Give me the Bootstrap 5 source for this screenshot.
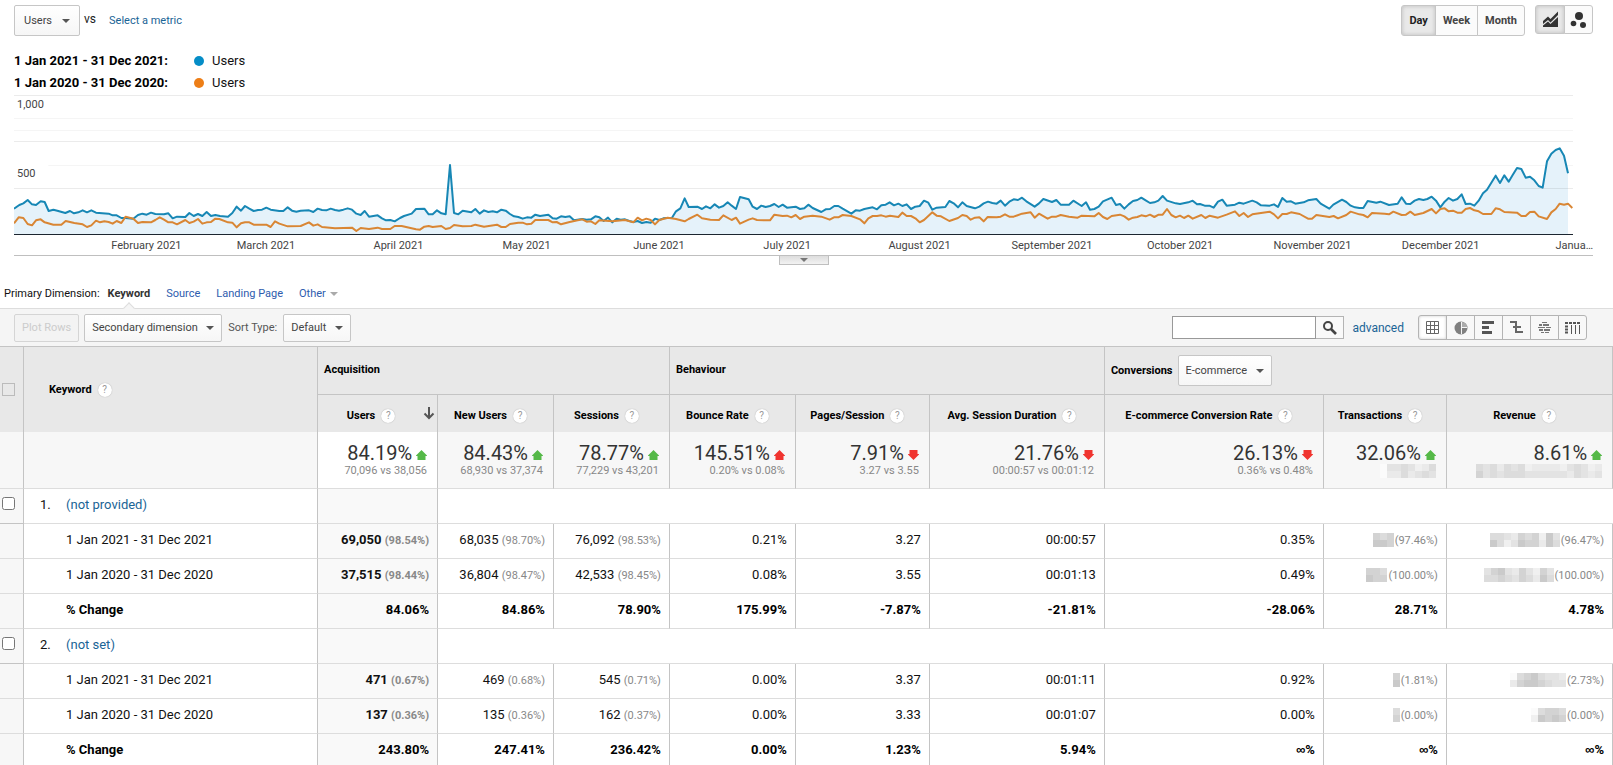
<!DOCTYPE html>
<html lang="en">
<head>
<meta charset="utf-8">
<meta name="viewport" content="width=device-width, initial-scale=1">
<title>Organic keywords</title>
<link href="https://cdn.jsdelivr.net/npm/bootstrap@5.3.0/dist/css/bootstrap.min.css" rel="stylesheet">
<style>
  body { font-family: Roboto, "Liberation Sans", sans-serif; font-size: 11px; line-height: 16px; color: #222; background: #fff; }
  a { color: #1a6496; text-decoration: none; }
  .fs-legend { font-size: 13px; line-height: 22px; color: #111; }
  .top-bar { padding: 5px 20px 0 14px; }
  .top-bar .versus { padding-top: 6px; }
  .top-bar a { padding: 8px 0 0 13px; }
  .report-chart { padding: 14px 20px 0 14px; }

  /* controls */
  .ga-btn, .ga-select { border: 1px solid #c6c6c6; border-radius: 2px; background-color: #fafafa; color: #444; font-size: 11px; line-height: 16px; height: 28px; padding: 0 9px; }
  .ga-select { appearance: none; padding: 0 23px 0 7px; background: url("data:image/svg+xml,%3Csvg xmlns='http://www.w3.org/2000/svg' width='8' height='4'%3E%3Cpath d='M0 0h8L4 4z' fill='%23555'/%3E%3C/svg%3E") no-repeat right 7px center, linear-gradient(#fff, #f6f6f6); }
  .ga-select.metric { padding: 0 26px 0 9px; background-position: right 9px center, 0 0; }
  .ga-tall { height: 31px; }
  .ga-btn:disabled { color: #ccc; background: #f3f3f3; border-color: #d5d5d5; padding: 0 7px; }
  .ga-group > button { border: 1px solid #c6c6c6; margin-left: -1px; background: #fbfbfb; color: #444; font-weight: 700; height: 31px; padding: 0 7px; line-height: 16px; }
  .ga-group > button:first-child { border-radius: 3px 0 0 3px; margin-left: 0; }
  .ga-group > button:last-child { border-radius: 0 3px 3px 0; }
  .ga-group > button.on { background: #e9e9e9; box-shadow: inset 0 0 4px #bbb; color: #222; }
  .ga-group.icons > button { width: 29px; height: 29px; padding: 0; display: flex; align-items: center; justify-content: center; }
  .ga-group.icons > button.on { width: 30px; }
  .ga-group.icons { margin-left: 10px; }
  .ga-group.views > button { width: 29px; height: 25px; padding: 0; display: flex; align-items: center; justify-content: center; border-color: #b4b4b4; background: #f8f8f8; }
  .ga-group.views > button.on { background: #fff; box-shadow: inset 0 0 3px #ccc; }
  .dot { width: 10px; height: 10px; border-radius: 50%; margin: 0 8px 0 5px; }
  .dot-now { background: #058dc7; } .dot-before { background: #ed7e17; }
  .legend-name { width: 175px; font-weight: 700; color: #000; }

  /* chart */
  .plot { height: 140px; margin: 1px 20px 0 0; }
  .plot svg { width: 100%; height: 100%; }
  .plot polyline, .plot line { vector-effect: non-scaling-stroke; fill: none; }
  .y-label { position: absolute; left: 3px; line-height: 14px; color: #444; }
  .y-top { top: 3px; } .y-mid { top: 72px; }
  .months { display: grid; height: 21px; color: #444; line-height: 21px; border-bottom: 1px solid #bfbfbf;
    grid-template-columns: minmax(0,31fr) minmax(0,28fr) minmax(0,31fr) minmax(0,30fr) minmax(0,31fr) minmax(0,30fr) minmax(0,31fr) minmax(0,31fr) minmax(0,30fr) minmax(0,31fr) minmax(0,30fr) minmax(0,31fr) 20px; }
  .months > span { width: 0; display: flex; justify-content: center; white-space: nowrap; }
  .months > span:last-child { width: auto; justify-content: flex-end; }
  .drawer { width: 50px; height: 9px; border: 1px solid #bfbfbf; border-top: 0; background: linear-gradient(#ddd, #f2f2f2); padding: 0; display: flex; justify-content: center; align-items: center; }

  /* dimension bar and toolbar */
  .dims { height: 43px; padding: 21px 4px 0; gap: 16px; color: #111; }
  .dims a, .dims select { color: #2e5cae; }
  .dims select { appearance: none; border: 0; padding: 0 12px 0 0; line-height: 16px; background: url("data:image/svg+xml,%3Csvg xmlns='http://www.w3.org/2000/svg' width='8' height='4'%3E%3Cpath d='M0 0h8L4 4z' fill='%23aaa'/%3E%3C/svg%3E") no-repeat right center; }
  .dims .current { color: #333; position: relative; margin-left: -8px; }
  .dims .current::after { content: ""; position: absolute; left: 50%; bottom: -10px; width: 8px; height: 8px; margin-left: -4px; background: #f5f5f5; border: 1px solid #ddd; border-right: 0; border-bottom: 0; transform: rotate(45deg); }
  .tools { height: 38px; background: #f5f5f5; border-top: 1px solid #ddd; padding: 0 26px 0 14px; }
  .tools .second { margin: 0 6px 0 5px; }
  .tools label { color: #555; margin-right: 6px; }
  .search-box input { width: 144px; height: 23px; border: 1px solid #999; border-radius: 0; padding: 0 4px; background: #fff; }
  .search-box button { width: 28px; height: 23px; border: 1px solid #b4b4b4; border-left: 0; background: #f9f9f9; padding: 0; display: flex; align-items: center; justify-content: center; }
  .fs-link { font-size: 12px; }
  .adv { margin: 0 14px 0 8px; }

  /* data table */
  .data { table-layout: fixed; width: 100%; border-collapse: separate; border-spacing: 0; border-top: 1px solid #c4c4c4; }
  .c-box { width: 24px; } .c-key { width: 18.23%; } .c-usr { width: 7.44%; } .c-new { width: 7.19%; } .c-bnc { width: 7.81%; }
  .c-pps { width: 8.31%; } .c-dur { width: 10.85%; } .c-ecr { width: 13.58%; } .c-trn { width: 7.63%; } .c-rev { width: 10.29%; }
  .data th, .data td { border-right: 1px solid #c4c4c4; vertical-align: top; }
  .data thead th { background: #e8e8e8; color: #000; font-weight: 700; vertical-align: middle; padding: 0 7px; }
  .data .groups th { height: 48px; border-bottom: 1px solid #c4c4c4; }
  .data .groups th[rowspan] { border-bottom: 0; }
  .data .groups th:first-child { padding: 0 0 0 2px; }
  .data .groups .key { padding-left: 25px; }
  .data .groups .group-name { padding: 0 6px 1px; }
  .data .groups .group-conv { padding: 0 6px; }
  .group-conv select { margin-left: 5px; }
  .data .cols th { height: 37px; padding: 4px 10px 0 0; text-align: center; white-space: nowrap; position: relative; }
  .data .cols th:first-child { padding-right: 13px; }
  .help { display: inline-flex; align-items: center; justify-content: center; width: 14px; height: 14px; margin-left: 6px; border-radius: 50%; background: #fff; box-shadow: 0 0 1px #999; color: #999; font-size: 10px; line-height: 14px; font-weight: 400; }
  .sort-arrow { position: absolute; right: 2px; top: 12px; }
  .data .totals td { height: 57px; padding: 10px 10px 0 0; background: #f7f7f7; border-bottom: 1px solid #ddd; text-align: right; color: #888; line-height: 13px; white-space: nowrap; }
  .data .totals .sorted { background: #fff; }
  .big { font-size: 20px; line-height: 22px; color: #333; }
  .big svg { margin-left: -1px; }
  .data .rows td, .data .rows th { height: 35px; padding: 6px 8px 0 0; border-bottom: 1px solid #ddd; font-size: 13px; line-height: 19px; text-align: right; color: #111; white-space: nowrap; font-weight: 400; }
  .data .rows td.box { background: #f7f7f7; text-align: left; padding: 8px 0 0 2px; line-height: 12px; }
  .data .rows .item td.box { border-bottom-color: #c4c4c4; }
  .data .rows th { text-align: left; padding-left: 42px; }
  .data .rows .item th { padding-left: 16px; }
  .data .rows .sorted { background: #f9f9f9; font-weight: 700; }
  .data .rows .change > * { font-weight: 700; color: #000; }
  .data .rows .item .rest { border-right: 0; }
  .data small { font-size: 11px; color: #888; }
  .inf { font-family: "Liberation Sans", sans-serif; }
  .num { display: inline-block; width: 26px; }
  .tick { width: 13px; height: 13px; margin: 0; display: block; }
  .redact { display: inline-block; vertical-align: -3px; margin-right: 1px; }
  .totals .redact { margin-right: 0; vertical-align: top; }
  .tick:disabled { appearance: none; border: 1px solid #bbb; background: #e8e8e8; }
</style>
</head>
<body>
<div class="vh-100 overflow-hidden">
  <header class="top-bar d-flex align-items-start">
    <select class="ga-select metric ga-tall" aria-label="Metric"><option>Users</option></select>
    <span class="versus ms-1 fs-link">vs</span>
    <a href="#">Select a metric</a>
    <div class="ga-group d-flex ms-auto">
      <button type="button" class="on">Day</button><button type="button">Week</button><button type="button">Month</button>
    </div>
    <div class="ga-group icons d-flex">
      <button type="button" class="on" aria-label="Line chart"><svg width="17" height="17" viewBox="0 0 17 17"><path d="M1 10 6 5.500 8.500 8 16 .5V4L8.500 11.500 6 9 1 13ZM1 14.500 6 10.500 8.500 13 16 6V16H1Z" fill="#333"/></svg></button>
      <button type="button" aria-label="Motion chart"><svg width="18" height="18" viewBox="0 0 18 18" fill="#333"><circle cx="9" cy="5" r="4"/><circle cx="3.500" cy="12.500" r="2.800"/><circle cx="13" cy="14" r="3"/></svg></button>
    </div>
  </header>

  <section class="report-chart">
    <div class="fs-legend d-flex align-items-center"><span class="legend-name">1 Jan 2021 - 31 Dec 2021:</span><span class="dot dot-now"></span>Users</div>
    <div class="fs-legend d-flex align-items-center"><span class="legend-name">1 Jan 2020 - 31 Dec 2020:</span><span class="dot dot-before"></span>Users</div>
    <div class="position-relative">
      <div class="plot">
        <svg viewBox="42 285 4677 420" preserveAspectRatio="none" aria-label="Users per day">
          <g stroke="#ebebeb" stroke-width="1">
            <line x1="42" x2="4719" y1="286.500" y2="286.500"/><line x1="42" x2="4719" y1="424.500" y2="424.500"/>
          </g>
          <g stroke="#f5f5f5" stroke-width="1">
            <line x1="42" x2="4719" y1="355.500" y2="355.500"/><line x1="42" x2="4719" y1="391.500" y2="391.500"/><line x1="145" x2="4719" y1="496.500" y2="496.500"/>
          </g>
          <path id="area" fill="#e5f2fa"/>
          <line x1="42" x2="4719" y1="565.500" y2="565.500" stroke="#000" stroke-opacity=".08"/>
          <polyline id="now" stroke="#1787b5" stroke-width="2" stroke-linejoin="round" points="42,626 58,615 70,610 83,600 96,613 108,615 122,604 134,606 146,633 160,629 172,632 196,639 210,633 222,640 235,637 248,631 261,637 274,631 288,638 326,641 338,646 350,646 364,654 377,654 400,656 414,645 427,641 440,644 453,638 466,642 492,643 505,640 518,655 531,650 556,651 568,639 581,648 594,642 607,648 620,636 633,648 646,645 660,648 684,650 697,639 710,620 723,632 735,618 748,626 761,633 774,630 786,629 799,623 812,629 838,633 850,633 863,622 876,632 889,635 902,632 927,631 940,636 953,626 966,630 979,631 992,626 1005,630 1017,632 1030,629 1043,625 1056,629 1069,641 1082,645 1094,633 1107,650 1133,646 1146,655 1158,661 1171,660 1184,664 1200,654 1212,648 1235,641 1248,627 1273,626 1286,643 1298,643 1311,631 1324,640 1337,643 1350,495 1362,639 1375,643 1388,632 1414,637 1426,627 1439,641 1452,631 1465,636 1478,634 1491,637 1504,629 1517,632 1530,642 1542,649 1555,651 1568,656 1581,652 1594,653 1606,644 1620,648 1645,644 1658,655 1670,656 1683,649 1696,651 1709,649 1722,661 1747,657 1760,659 1773,658 1786,649 1798,652 1811,663 1824,653 1837,667 1850,656 1862,659 1875,658 1888,663 1900,666 1913,663 1926,669 1939,666 1952,668 1965,656 1978,660 1990,655 2016,653 2028,634 2041,625 2054,595 2066,621 2092,620 2106,627 2118,619 2131,625 2144,613 2157,623 2170,618 2183,607 2195,617 2208,627 2220,591 2246,598 2258,620 2271,627 2284,617 2297,621 2310,618 2323,612 2336,621 2348,614 2361,623 2387,620 2400,627 2413,625 2425,614 2438,624 2464,636 2477,628 2490,627 2503,618 2515,618 2528,626 2554,641 2567,631 2580,632 2593,627 2618,622 2631,628 2644,616 2657,614 2669,607 2682,616 2695,611 2707,618 2720,613 2733,627 2746,620 2759,618 2772,602 2785,608 2797,629 2810,623 2836,621 2848,603 2861,610 2874,622 2887,607 2900,618 2925,625 2938,620 2951,610 2964,605 2977,609 2990,611 3002,602 3015,617 3028,605 3041,598 3054,600 3066,593 3079,604 3104,620 3117,610 3130,597 3156,606 3169,600 3182,614 3207,614 3220,602 3245,618 3258,607 3270,629 3283,627 3296,620 3309,604 3335,593 3348,615 3360,612 3373,626 3386,613 3399,603 3412,600 3424,593 3437,601 3450,609 3463,607 3475,602 3488,588 3501,602 3527,610 3540,612 3565,607 3578,602 3591,613 3600,612 3614,617 3628,617 3641,623 3654,605 3667,599 3680,617 3705,614 3718,608 3731,611 3757,602 3770,607 3783,616 3809,617 3822,613 3834,621 3847,594 3860,605 3873,604 3886,611 3911,607 3924,601 3949,597 3962,611 3988,626 4000,614 4026,599 4039,606 4052,617 4065,622 4078,624 4090,624 4103,603 4129,608 4141,605 4167,615 4193,611 4205,592 4218,611 4231,612 4244,602 4257,597 4270,600 4282,597 4295,590 4308,602 4321,622 4334,605 4346,594 4359,602 4372,597 4385,583 4397,612 4410,611 4423,617 4436,602 4449,580 4461,569 4487,527 4500,549 4513,526 4526,545 4538,525 4551,504 4564,507 4577,533 4590,530 4603,541 4616,558 4628,563 4641,484 4654,461 4667,450 4679,445 4692,467 4704,520"/>
          <polyline stroke="#d98634" stroke-width="2" stroke-linejoin="round" points="42,670 56,652 70,654 83,672 96,676 108,661 122,658 134,667 160,674 184,674 197,663 223,669 248,673 261,681 274,676 288,662 300,667 313,664 326,666 338,671 350,663 364,669 377,650 400,656 414,669 427,666 453,667 466,660 479,652 492,659 505,667 518,667 531,673 556,660 568,669 581,665 594,657 607,671 620,667 633,666 646,656 658,657 684,667 697,668 710,682 723,670 735,667 748,667 761,674 799,674 812,681 825,664 838,671 863,679 902,678 927,667 940,677 953,673 966,681 1005,685 1056,683 1069,693 1082,684 1107,687 1133,683 1146,687 1171,687 1184,678 1205,678 1248,688 1260,689 1273,680 1286,678 1298,681 1324,678 1337,687 1350,684 1362,675 1388,679 1414,678 1426,674 1452,680 1491,674 1504,681 1517,681 1530,672 1555,668 1568,668 1581,673 1594,671 1606,660 1645,660 1658,667 1670,666 1683,673 1709,666 1747,658 1760,665 1773,664 1786,672 1798,661 1837,664 1875,660 1900,667 1913,653 1926,661 1939,656 1952,660 1965,673 1978,660 2003,653 2028,657 2054,664 2066,657 2092,644 2106,655 2131,659 2157,660 2170,646 2195,660 2208,653 2220,671 2246,659 2258,655 2271,660 2310,661 2323,644 2348,648 2361,647 2374,652 2387,645 2400,657 2413,650 2438,647 2464,650 2489,659 2502,652 2515,652 2528,645 2554,648 2580,658 2593,670 2605,655 2618,648 2631,648 2644,646 2657,650 2670,647 2695,651 2707,638 2720,648 2733,648 2746,655 2759,667 2772,660 2797,637 2810,647 2823,649 2848,663 2874,654 2887,645 2900,648 2912,659 2925,653 2938,652 2951,664 2963,651 2990,652 3002,650 3015,643 3028,650 3041,650 3066,641 3092,637 3104,653 3117,641 3143,656 3156,650 3169,650 3182,645 3207,650 3233,653 3245,647 3283,649 3296,639 3309,651 3322,657 3335,648 3360,644 3373,649 3386,659 3399,653 3412,651 3424,646 3437,649 3450,644 3463,651 3476,644 3488,644 3501,627 3514,645 3527,652 3540,647 3552,654 3565,647 3578,656 3604,645 3616,654 3629,647 3654,653 3680,644 3705,634 3718,648 3731,639 3744,651 3757,643 3783,639 3809,635 3822,643 3834,655 3847,642 3860,642 3873,637 3899,642 3924,656 3936,656 3949,645 3988,651 4001,648 4014,655 4039,645 4052,635 4078,643 4090,645 4103,652 4116,639 4154,641 4167,643 4180,635 4205,645 4218,644 4231,635 4244,645 4270,639 4295,627 4308,640 4321,627 4334,625 4346,634 4359,632 4372,638 4385,638 4397,627 4410,624 4423,631 4436,634 4449,642 4474,642 4487,625 4500,628 4513,636 4551,638 4564,648 4577,648 4590,636 4603,635 4616,649 4641,657 4654,637 4667,627 4679,611 4692,614 4704,611 4717,624"/>
          <line x1="42" x2="4719" y1="703.500" y2="703.500" stroke="#1c2630" stroke-width="1"/>
        </svg>
      </div>
      <span class="y-label y-top">1,000</span><span class="y-label y-mid">500</span>
    </div>
    <div class="months">
      <span></span><span>February 2021</span><span>March 2021</span><span>April 2021</span><span>May 2021</span><span>June 2021</span><span>July 2021</span><span>August 2021</span><span>September 2021</span><span>October 2021</span><span>November 2021</span><span>December 2021</span><span>Janua…</span>
    </div>
    <button type="button" class="drawer mx-auto" aria-label="Collapse chart"><svg width="8" height="4"><path d="M0 0h8L4 4z" fill="#777"/></svg></button>
  </section>

  <nav class="dims d-flex align-items-start">
    <span>Primary Dimension:</span>
    <strong class="current">Keyword</strong>
    <a href="#">Source</a>
    <a href="#">Landing Page</a>
    <select aria-label="Other dimension"><option>Other</option></select>
  </nav>

  <div class="tools d-flex align-items-center">
    <button type="button" class="ga-btn" disabled>Plot Rows</button>
    <select class="ga-select second" aria-label="Secondary dimension"><option>Secondary dimension</option></select>
    <label for="sort">Sort Type:</label>
    <select id="sort" class="ga-select"><option>Default</option></select>
    <form class="search-box d-flex ms-auto" onsubmit="return false">
      <input type="text" aria-label="Search keywords"><button type="submit" aria-label="Search"><svg width="15" height="15" viewBox="0 0 15 15" fill="none" stroke="#444"><circle cx="6" cy="6" r="4" stroke-width="2"/><path d="m9 9 5 5" stroke-width="2.600"/></svg></button>
    </form>
    <a href="#" class="fs-link adv">advanced</a>
    <div class="ga-group views d-flex">
      <button type="button" class="on" aria-label="Data"><svg width="13" height="13" fill="none" stroke="#666"><path d="M.5.5h12v12H.5zM4.500 0v13M8.500 0v13M0 4.500h13M0 8.500h13"/></svg></button>
      <button type="button" aria-label="Percentage"><svg width="14" height="14"><circle cx="7" cy="7" r="6.500" fill="#808080"/><path d="M8 1a6 6 0 0 1 5.300 5H8z" fill="#aaa"/><path d="M7.500 1v12M7.500 6.500H13" stroke="#f4f4f4"/></svg></button>
      <button type="button" aria-label="Performance"><svg width="13" height="13" fill="#555"><path d="M0 0h12v3H0zM0 5h7v3H0zM0 10h10v3H0z"/></svg></button>
      <button type="button" aria-label="Comparison"><svg width="14" height="13" fill="#666"><path d="M0 0h6v2H0zM3 5h5v2H3zM6 5h5v2H6zM6 10h7v2H6zM5 0h2v12H5z"/></svg></button>
      <button type="button" aria-label="Term cloud"><svg width="13" height="13" fill="#777"><path d="M4 1h5v1H4zM1 3h3v2H1zM5 3h6v2H5zM0 6h7v1H0zM8 6h5v1H8zM1 8h4v2H1zM6 8h6v2H6zM3 11h3v1H3zM7 11h4v1H7z"/></svg></button>
      <button type="button" aria-label="Pivot"><svg width="16" height="12" fill="none" stroke="#555"><path d="M0 1h16" stroke-width="2" stroke-dasharray="3 1"/><path d="M0 4.500h3M0 7.500h3M0 10.500h3" stroke-width="2"/><path d="M6.500 3v9M10.500 3v9M14.500 3v9"/></svg></button>
    </div>
  </div>

  <table class="data">
    <colgroup><col class="c-box"><col class="c-key"><col class="c-usr"><col class="c-new"><col class="c-new"><col class="c-bnc"><col class="c-pps"><col class="c-dur"><col class="c-ecr"><col class="c-trn"><col class="c-rev"></colgroup>
    <thead>
      <tr class="groups">
        <th rowspan="2"><input type="checkbox" class="tick" disabled aria-label="Select all rows"></th>
        <th rowspan="2" class="key">Keyword<span class="help">?</span></th>
        <th colspan="3" class="group-name">Acquisition</th>
        <th colspan="3" class="group-name">Behaviour</th>
        <th colspan="3" class="group-conv"><div class="d-flex align-items-center"><label for="conv">Conversions</label><select id="conv" class="ga-select ga-tall"><option>E-commerce</option></select></div></th>
      </tr>
      <tr class="cols">
        <th>Users<span class="help">?</span><svg class="sort-arrow" width="12" height="13" fill="none" stroke="#555" stroke-width="2"><path d="M6 0v11M1.500 6.500 6 11l4.500-4.500"/></svg></th>
        <th>New Users<span class="help">?</span></th><th>Sessions<span class="help">?</span></th><th>Bounce Rate<span class="help">?</span></th><th>Pages/Session<span class="help">?</span></th><th>Avg. Session Duration<span class="help">?</span></th><th>E-commerce Conversion Rate<span class="help">?</span></th><th>Transactions<span class="help">?</span></th><th>Revenue<span class="help">?</span></th>
      </tr>
    </thead>
    <tbody>
      <tr class="totals">
        <td></td><td></td>
        <td class="sorted"><div class="big">84.19% <svg width="11" height="10" fill="#55b948"><use href="#up"/></svg></div>70,096 vs 38,056</td>
        <td><div class="big">84.43% <svg width="11" height="10" fill="#55b948"><use href="#up"/></svg></div>68,930 vs 37,374</td>
        <td><div class="big">78.77% <svg width="11" height="10" fill="#55b948"><use href="#up"/></svg></div>77,229 vs 43,201</td>
        <td><div class="big">145.51% <svg width="11" height="10" fill="#f0342f"><use href="#up"/></svg></div>0.20% vs 0.08%</td>
        <td><div class="big">7.91% <svg width="11" height="10" fill="#f0342f"><use href="#down"/></svg></div>3.27 vs 3.55</td>
        <td><div class="big">21.76% <svg width="11" height="10" fill="#f0342f"><use href="#down"/></svg></div>00:00:57 vs 00:01:12</td>
        <td><div class="big">26.13% <svg width="11" height="10" fill="#f0342f"><use href="#down"/></svg></div>0.36% vs 0.48%</td>
        <td><div class="big">32.06% <svg width="11" height="10" fill="#55b948"><use href="#up"/></svg></div><svg class="redact" data-tones="03343124 02242343"></svg></td>
        <td><div class="big">8.61% <svg width="11" height="10" fill="#55b948"><use href="#up"/></svg></div><svg class="redact" data-tones="434243412222134312 534344433333324323"></svg></td>
      </tr>
    </tbody>
    <tbody class="rows">
      <tr class="item"><td class="box"><input type="checkbox" class="tick" aria-label="Select (not provided)"></td><th><span class="num">1.</span><a href="#">(not provided)</a></th><td class="sorted"></td><td colspan="8" class="rest"></td></tr>
      <tr><td class="box"></td><th>1 Jan 2021 - 31 Dec 2021</th><td class="sorted">69,050 <small>(98.54%)</small></td><td>68,035 <small>(98.70%)</small></td><td>76,092 <small>(98.53%)</small></td><td>0.21%</td><td>3.27</td><td>00:00:57</td><td>0.35%</td><td><svg class="redact" data-tones="545 665"></svg><small>(97.46%)</small></td><td><svg class="redact" data-tones="4432545163 6413655264"></svg><small>(96.47%)</small></td></tr>
      <tr><td class="box"></td><th>1 Jan 2020 - 31 Dec 2020</th><td class="sorted">37,515 <small>(98.44%)</small></td><td>36,804 <small>(98.47%)</small></td><td>42,533 <small>(98.45%)</small></td><td>0.08%</td><td>3.55</td><td>00:01:13</td><td>0.49%</td><td><svg class="redact" data-tones="554 655"></svg><small>(100.00%)</small></td><td><svg class="redact" data-tones="3563253153 4454354264"></svg><small>(100.00%)</small></td></tr>
      <tr class="change"><td class="box"></td><th>% Change</th><td class="sorted">84.06%</td><td>84.86%</td><td>78.90%</td><td>175.99%</td><td>-7.87%</td><td>-21.81%</td><td>-28.06%</td><td>28.71%</td><td>4.78%</td></tr>
      <tr class="item"><td class="box"><input type="checkbox" class="tick" aria-label="Select (not set)"></td><th><span class="num">2.</span><a href="#">(not set)</a></th><td class="sorted"></td><td colspan="8" class="rest"></td></tr>
      <tr><td class="box"></td><th>1 Jan 2021 - 31 Dec 2021</th><td class="sorted">471 <small>(0.67%)</small></td><td>469 <small>(0.68%)</small></td><td>545 <small>(0.71%)</small></td><td>0.00%</td><td>3.37</td><td>00:01:11</td><td>0.92%</td><td><svg class="redact" data-tones="5 6"></svg><small>(1.81%)</small></td><td><svg class="redact" data-tones="04564332 25665433"></svg><small>(2.73%)</small></td></tr>
      <tr><td class="box"></td><th>1 Jan 2020 - 31 Dec 2020</th><td class="sorted">137 <small>(0.36%)</small></td><td>135 <small>(0.36%)</small></td><td>162 <small>(0.37%)</small></td><td>0.00%</td><td>3.33</td><td>00:01:07</td><td>0.00%</td><td><svg class="redact" data-tones="4 5"></svg><small>(0.00%)</small></td><td><svg class="redact" data-tones="04554 16565"></svg><small>(0.00%)</small></td></tr>
      <tr class="change"><td class="box"></td><th>% Change</th><td class="sorted">243.80%</td><td>247.41%</td><td>236.42%</td><td>0.00%</td><td>1.23%</td><td>5.94%</td><td><span class="inf">∞</span>%</td><td><span class="inf">∞</span>%</td><td><span class="inf">∞</span>%</td></tr>
    </tbody>
  </table>
</div>

<svg width="0" height="0" class="position-absolute"><defs>
  <path id="up" d="M5.500 0 11 5.500V6H9.500v4h-8V6H0v-.5z"/>
  <path id="down" d="M5.500 10 11 4.500V4H9.500V0h-8v4H0v.5z"/>
</defs></svg>
<script src="https://cdn.jsdelivr.net/npm/bootstrap@5.3.0/dist/js/bootstrap.bundle.min.js"></script>
<script>
  // Shade the area under the current period's line.
  document.getElementById('area').setAttribute('d',
    'M' + document.getElementById('now').getAttribute('points') + ' 4704,703 42,703Z');

  // Hidden figures are drawn as a mosaic of 7px tiles, one digit per tone.
  const tones = ['#fbfbfb', '#f0f0f0', '#eaeaea', '#e3e3e3', '#dcdcdc', '#d3d3d3', '#cacaca'];
  document.querySelectorAll('.redact').forEach(el => {
    const lines = el.dataset.tones.split(' ');
    el.setAttribute('width', lines[0].length * 7);
    el.setAttribute('height', 14);
    el.innerHTML = lines.map((line, y) => [...line].map((t, x) =>
      `<rect x="${x * 7}" y="${y * 7}" width="7" height="7" fill="${tones[t]}"/>`).join('')).join('');
  });
</script>
</body>
</html>
